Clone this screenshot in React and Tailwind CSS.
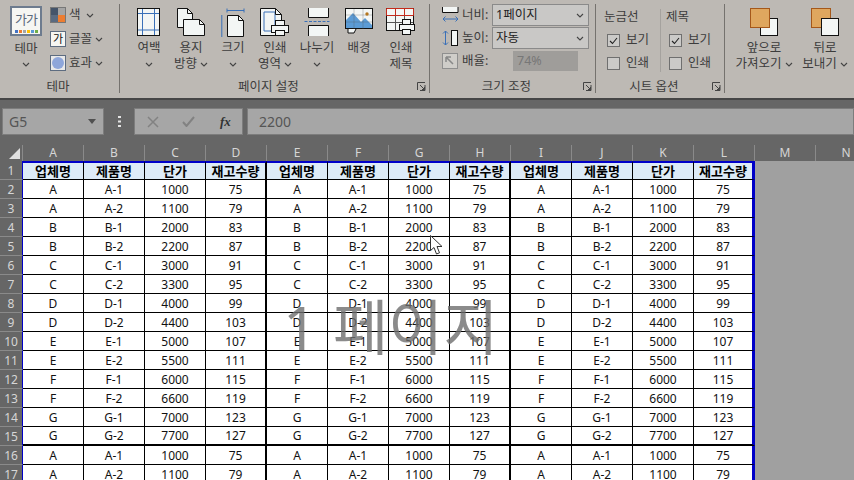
import React from "react";

const products = ["A", "A", "B", "B", "C", "C", "D", "D", "E", "E", "F", "F", "G", "G", "A", "A"];
const sub = [1, 2, 1, 2, 1, 2, 1, 2, 1, 2, 1, 2, 1, 2, 1, 2];
const prices = [1000, 1100, 2000, 2200, 3000, 3300, 4000, 4400, 5000, 5500, 6000, 6600, 7000, 7700, 1000, 1100];
const stock = [75, 79, 83, 87, 91, 95, 99, 103, 107, 111, 115, 119, 123, 127, 75, 79];
const columns = ["A", "B", "C", "D", "E", "F", "G", "H", "I", "J", "K", "L"];
const headers = ["업체명", "제품명", "단가", "재고수량"];

function Chevron({ className = "" }) {
  return (
    <svg width="8" height="5" viewBox="0 0 8 5" className={className}>
      <path d="M1 1l3 3 3-3" fill="none" stroke="#444" strokeWidth="1.1" />
    </svg>
  );
}

function Launcher() {
  return (
    <svg width="9" height="9" viewBox="0 0 9 9" className="shrink-0">
      <path d="M.5 8V.5H8M8 3v5.500H3M3 3l4.500 4.500M7.500 5v2.500H5" fill="none" stroke="#444" strokeWidth="1" />
    </svg>
  );
}

function BigButton({ icon, line1, line2, chevronOnly }) {
  return (
    <div className="w-[42px] flex flex-col items-center text-[12.5px] leading-[16px] text-[#3c3c3c]">
      <div className="h-[30px] mt-[8px] flex items-start justify-center">{icon}</div>
      <div className="mt-[2px] whitespace-nowrap">{line1}</div>
      {chevronOnly ? (
        <Chevron className="mt-[6px]" />
      ) : (
        line2 && (
          <div className="whitespace-nowrap flex items-center gap-[3px]">
            {line2}
            <Chevron />
          </div>
        )
      )}
    </div>
  );
}

const margins = (
  <svg width="24" height="28" viewBox="0 0 24 28">
    <rect x=".5" y=".5" width="22" height="27" fill="#f3f6f5" stroke="#111" />
    <path d="M5.500 1v26M17.500 1v26M1 5.500h21M1 22h21" stroke="#3a70b8" strokeWidth="1" />
  </svg>
);
const orientation = (
  <svg width="29" height="28" viewBox="0 0 29 28">
    <path d="M.5.5h10l5 5v14H.5z" fill="#f3f6f5" stroke="#111" />
    <path d="M10.500.5v5h5" fill="none" stroke="#111" />
    <path d="M6.500 11.500h16l5 5v11h-21z" fill="#f3f6f5" stroke="#111" />
    <path d="M22.500 11.500v5h5" fill="none" stroke="#111" />
  </svg>
);
const sizeIcon = (
  <svg width="24" height="30" viewBox="0 0 24 30">
    <path d="M6 2.500h17M6 .5v4M23 .5v4M.8 7v22" fill="none" stroke="#3a70b8" strokeWidth="1" />
    <path d="M6.500 7.500h11l5 5v16h-16z" fill="#f3f6f5" stroke="#111" />
    <path d="M17.500 7.500v5h5" fill="none" stroke="#111" />
  </svg>
);
const printArea = (
  <svg width="30" height="30" viewBox="0 0 30 30">
    <path d="M.5.5h15l6 6v21H.5z" fill="#f3f6f5" stroke="#111" />
    <path d="M4 4h11v19H4z" fill="none" stroke="#3a70b8" />
    <path d="M15.500.5v6h6" fill="none" stroke="#111" />
    <rect x="15.500" y="12.500" width="9" height="5" fill="#f3f6f5" stroke="#111" />
    <rect x="11.500" y="17.500" width="17" height="7" fill="#f3f6f5" stroke="#111" />
    <rect x="15.500" y="22.500" width="9" height="5" fill="#f3f6f5" stroke="#111" />
  </svg>
);
const breaks = (
  <svg width="26" height="28" viewBox="0 0 26 28">
    <path d="M4.500 0v9.500h20V0M4.500 28V17.500h20V28" fill="#f3f6f5" stroke="#111" />
    <path d="M.5 13.500h25" stroke="#3a70b8" strokeDasharray="3 1.500" />
  </svg>
);
const background = (
  <svg width="29" height="26" viewBox="0 0 29 26">
    <rect x=".5" y=".5" width="27" height="20" fill="#f3f6f5" stroke="#111" />
    <path d="M1 12l7-7 8 9 4-4 7 7v3H1z" fill="#5b9bd5" />
    <path d="M1 7h26M1 14h26M9 1v20M18 1v20" stroke="#555" strokeWidth=".3" />
    <circle cx="22" cy="6" r="1.700" fill="#b5761f" />
    <path d="M3 21v4h6l2-4" fill="#f3f6f5" stroke="#111" />
  </svg>
);
const printTitle = (
  <svg width="30" height="27" viewBox="0 0 30 27">
    <rect x=".5" y=".5" width="27" height="22" fill="#f3f6f5" stroke="#111" />
    <path d="M9.500 1v21M18.500 1v21M1 7.500h26M1 14.500h26" stroke="#555" strokeWidth="1" />
    <path d="M.5.5h27v7H.5zM9.500 1v6M18.500 1v6" fill="none" stroke="#c42b1c" strokeWidth="1" />
    <rect x="16.500" y="11.500" width="8" height="5" fill="#f3f6f5" stroke="#111" />
    <rect x="13.500" y="16.500" width="15" height="6" fill="#f3f6f5" stroke="#111" />
    <rect x="16.500" y="21.500" width="8" height="5" fill="#f3f6f5" stroke="#111" />
  </svg>
);

function GroupLabel({ children, launcher }) {
  return (
    <div className="h-[13px] flex items-center pr-[3px] text-[12.5px] leading-[13px] text-[#3c3c3c]">
      <span className="flex-1 text-center">{children}</span>
      {launcher && <Launcher />}
    </div>
  );
}

function ThemeGroup() {
  return (
    <section className="w-[120px] shrink-0 flex flex-col border-r border-[#75726e] mt-[4px] h-[89px]">
      <div className="flex h-[76px]">
        <div className="w-[52px] flex flex-col items-center text-[12.5px] leading-[16px] text-[#3c3c3c] pt-[2px]">
          <div className="w-[32px] h-[30px] border-2 border-[#6d7b8e] bg-[#f6f6f2] flex flex-col items-center justify-between pt-[3px] pb-[1px]">
            <span className="text-[13px] leading-[16px] tracking-[-1px] text-[#5a6a7c]">가가</span>
            <div className="flex gap-[1px]">
              <i className="w-[3px] h-[3px] bg-[#4472c4]" />
              <i className="w-[3px] h-[3px] bg-[#ed7d31]" />
              <i className="w-[3px] h-[3px] bg-[#a5a5a5]" />
              <i className="w-[3px] h-[3px] bg-[#ffc000]" />
              <i className="w-[3px] h-[3px] bg-[#5b9bd5]" />
              <i className="w-[3px] h-[3px] bg-[#70ad47]" />
            </div>
          </div>
          <div className="mt-[5px]">테마</div>
          <Chevron className="mt-[5px]" />
        </div>
        <div className="flex flex-col gap-[8px] pt-[3px] -ml-[2px] text-[12.5px] leading-[16px] text-[#3c3c3c]">
          <div className="flex items-center gap-[3px] h-[16px]">
            <div className="w-[16px] h-[16px] grid grid-cols-2 border border-[#777]">
              <i className="bg-[#44546a]" />
              <i className="bg-[#a5a5a5]" />
              <i className="bg-[#5a6a80]" />
              <i className="bg-[#ed7d31]" />
            </div>
            <span>색</span>
            <Chevron className="ml-[2px]" />
          </div>
          <div className="flex items-center gap-[3px] h-[16px]">
            <div className="w-[16px] h-[16px] border border-[#5d6c80] bg-[#f6f6f2] text-[11px] leading-[13px] text-center text-[#111]">가</div>
            <span>글꼴</span>
            <Chevron />
          </div>
          <div className="flex items-center gap-[3px] h-[16px]">
            <div className="w-[16px] h-[16px] border border-[#5d6c80] bg-[#e9e9e9] flex items-center justify-center">
              <i className="w-[12px] h-[12px] rounded-full bg-[#8ea6da]" />
            </div>
            <span>효과</span>
            <Chevron />
          </div>
        </div>
      </div>
      <GroupLabel>테마</GroupLabel>
    </section>
  );
}

function PageGroup() {
  return (
    <section className="w-[310px] shrink-0 flex flex-col border-r border-[#75726e] mt-[4px] h-[89px]">
      <div className="flex h-[80px] pl-[8px] -mt-[4px]">
        <BigButton icon={margins} line1="여백" chevronOnly />
        <BigButton icon={orientation} line1="용지" line2="방향" />
        <BigButton icon={sizeIcon} line1="크기" chevronOnly />
        <BigButton icon={printArea} line1="인쇄" line2="영역" />
        <BigButton icon={breaks} line1="나누기" chevronOnly />
        <BigButton icon={background} line1="배경" />
        <div className="w-[42px] flex flex-col items-center text-[12.5px] leading-[16px] text-[#3c3c3c]">
          <div className="h-[30px] mt-[8px]">{printTitle}</div>
          <div className="mt-[2px]">인쇄</div>
          <div>제목</div>
        </div>
      </div>
      <GroupLabel launcher>페이지 설정</GroupLabel>
    </section>
  );
}

function SizeRow({ icon, label, children }) {
  return (
    <div className="flex items-center h-[22px]">
      <div className="w-[18px] h-[18px] flex items-center justify-center shrink-0">{icon}</div>
      <span className="ml-[3px] w-[27px] text-[12.5px] whitespace-nowrap">{label}</span>
      {children}
    </div>
  );
}

function SizeSelect({ value }) {
  return (
    <div className="ml-[3px] w-[97px] h-[22px] border border-[#8a8a8a] bg-[#c9c8c6] flex items-center justify-between pl-[3px] pr-[4px] text-[12.5px] text-[#222]">
      <span>{value}</span>
      <Chevron />
    </div>
  );
}

function SizeGroup() {
  return (
    <section className="w-[166px] shrink-0 flex flex-col border-r border-[#75726e] mt-[4px] h-[89px]">
      <div className="h-[76px] pl-[11px] flex flex-col gap-[1px] text-[#3c3c3c]">
        <SizeRow
          label="너비:"
          icon={
            <svg width="17" height="16" viewBox="0 0 17 16">
              <path d="M.5 0v5.500h15.500V0" fill="#f3f6f5" stroke="#111" />
              <path d="M1 12h15M3.500 9.500L1 12l2.500 2.500M13.500 9.500L16 12l-2.500 2.500" fill="none" stroke="#3a70b8" />
            </svg>
          }
        >
          <SizeSelect value="1페이지" />
        </SizeRow>
        <SizeRow
          label="높이:"
          icon={
            <svg width="17" height="17" viewBox="0 0 17 17">
              <rect x="9.500" y=".5" width="6" height="15" fill="#f3f6f5" stroke="#111" />
              <path d="M3.500 1v14M1 3.500L3.500 1 6 3.500M1 12.500L3.500 15 6 12.500" fill="none" stroke="#3a70b8" />
            </svg>
          }
        >
          <SizeSelect value="자동" />
        </SizeRow>
        <SizeRow
          label="배율:"
          icon={
            <svg width="16" height="16" viewBox="0 0 16 16">
              <rect x=".5" y=".5" width="15" height="15" fill="#cfcdc9" stroke="#8f8f8f" />
              <path d="M4 4l7 7M4 4h5M4 4v5" fill="none" stroke="#888" strokeWidth="1.500" />
            </svg>
          }
        >
          <div className="ml-[24px] w-[65px] h-[20px] bg-[#9f9d9a] pl-[4px] text-[12.5px] leading-[20px] text-[#777]">74%</div>
        </SizeRow>
      </div>
      <GroupLabel launcher>크기 조정</GroupLabel>
    </section>
  );
}

function Check({ checked, label }) {
  return (
    <div className="flex items-center gap-[6px] h-[23px] text-[12.5px] pl-[1px]">
      <div className="w-[13px] h-[13px] border border-[#6f6f6f] bg-[#cbcac8] flex items-center justify-center">
        {checked && (
          <svg width="9" height="8" viewBox="0 0 9 8">
            <path d="M1 4l2.500 2.500L8 1" fill="none" stroke="#222" strokeWidth="1.100" />
          </svg>
        )}
      </div>
      <span>{label}</span>
    </div>
  );
}

function SheetGroup() {
  return (
    <section className="w-[129px] shrink-0 flex flex-col border-r border-[#75726e] mt-[4px] h-[89px]">
      <div className="h-[76px] flex text-[#3c3c3c] text-[12.5px]">
        <div className="w-[65px] border-r border-[#a5a29e] pl-[10px] mt-[5px] h-[63px]">
          <div className="h-[20px] leading-[15px] -ml-[2px]">눈금선</div>
          <Check checked label="보기" />
          <Check label="인쇄" />
        </div>
        <div className="pl-[5px] mt-[5px]">
          <div className="h-[20px] leading-[15px]">제목</div>
          <div className="pl-[2px]">
            <Check checked label="보기" />
            <Check label="인쇄" />
          </div>
        </div>
      </div>
      <GroupLabel launcher>시트 옵션</GroupLabel>
    </section>
  );
}

function ArrangeGroup() {
  return (
    <section className="flex-1 flex pl-[11px] text-[12.5px] leading-[16px] text-[#3c3c3c]">
      <div className="w-[56px] flex flex-col items-center pt-[8px]">
        <svg width="28" height="28" viewBox="0 0 28 28">
          <rect x="10.500" y="10.500" width="17" height="17" fill="#f3f6f5" stroke="#111" />
          <rect x=".5" y=".5" width="19" height="19" fill="#dfa75f" stroke="#a5581a" />
        </svg>
        <div className="mt-[4px] whitespace-nowrap">앞으로</div>
        <div className="whitespace-nowrap flex items-center gap-[3px]">
          가져오기
          <Chevron />
        </div>
      </div>
      <div className="w-[62px] ml-[2px] flex flex-col items-center pt-[8px]">
        <svg width="28" height="28" viewBox="0 0 28 28">
          <rect x=".5" y=".5" width="19" height="19" fill="#dfa75f" stroke="#a5581a" />
          <rect x="10.500" y="10.500" width="17" height="17" fill="#f3f6f5" stroke="#111" />
        </svg>
        <div className="mt-[4px] whitespace-nowrap">뒤로</div>
        <div className="whitespace-nowrap flex items-center gap-[3px]">
          보내기
          <Chevron />
        </div>
      </div>
    </section>
  );
}

function FormulaBar() {
  return (
    <div className="h-[47px] shrink-0 bg-[#666666] border-t-2 border-[#464646] flex items-start pt-[8px] pl-[2px] gap-[4px]">
      <div className="w-[102px] h-[27px] bg-[#a6a6a6] border border-[#7d7d7d] flex items-center justify-between pl-[6px] pr-[7px] text-[14px] text-[#555]">
        <span>G5</span>
        <svg width="8" height="5" viewBox="0 0 8 5">
          <path d="M0 0h8L4 5z" fill="#505050" />
        </svg>
      </div>
      <div className="w-[22px] h-[27px] flex items-center justify-center">
        <svg width="3" height="11" viewBox="0 0 3 11">
          <path d="M0 0h3v2H0zM0 4.500h3v2H0zM0 9h3v2H0z" fill="#e4e4e4" />
        </svg>
      </div>
      <div className="w-[109px] h-[27px] bg-[#a6a6a6] border border-[#7d7d7d] flex items-center pl-[12px] gap-[23px]">
        <svg width="12" height="12" viewBox="0 0 12 12">
          <path d="M1 1l10 10M11 1L1 11" stroke="#828282" strokeWidth="1.500" />
        </svg>
        <svg width="13" height="11" viewBox="0 0 13 11">
          <path d="M1 6l3.500 4L12 1" fill="none" stroke="#828282" strokeWidth="2" />
        </svg>
        <span className="font-['Liberation_Serif',serif] italic font-bold text-[13px] text-[#333] ml-[2px]">fx</span>
      </div>
      <div className="flex-1 h-[27px] bg-[#a6a6a6] border border-[#7d7d7d] pl-[11px] text-[14px] leading-[25px] text-[#555]">2200</div>
    </div>
  );
}

function ColumnHeaders() {
  return (
    <div className="flex h-[16px] shrink-0 bg-[#666666] text-[12px] leading-[16px] text-[#d6d6d6]">
      <div className="w-[23px] shrink-0 flex items-end justify-end border-r border-[#8a8a8a] pr-[2px] pb-[2px]">
        <svg width="11" height="11" viewBox="0 0 11 11">
          <path d="M11 0v11H0z" fill="#e0e0e0" />
        </svg>
      </div>
      {[...columns, "M", "N"].map((col) => (
        <div key={col} className="w-[61px] shrink-0 text-center border-r border-[#8a8a8a]">
          {col}
        </div>
      ))}
    </div>
  );
}

function Cell({ col, row, children, head }) {
  return (
    <div
      className={
        "w-[61px] shrink-0 flex items-center justify-center border-b pt-[1px] " +
        (col === 11 ? "border-r-[3px] border-r-[#0000c8] " : col === 3 || col === 7 ? "border-r-2 border-r-black " : "border-r border-r-black ") +
        (row === 13 ? "border-b-2 border-b-black " : "border-b-black ") +
        (head ? "bg-[#ddebf7] text-[13px] font-bold text-black border-t-2 border-t-[#0000c8] " : "bg-white text-[12px] text-[#111] ")
      }
    >
      {children}
    </div>
  );
}

function RowHead({ children }) {
  return (
    <div className="w-[23px] shrink-0 bg-[#666666] text-[#d6d6d6] text-[12px] pt-[1px] flex items-center justify-center border-r border-r-[#0000c8] border-b border-b-[#8a8a8a]">
      {children}
    </div>
  );
}

function Sheet() {
  const rows = products.map((p, i) => [p, `${p}-${sub[i]}`, prices[i], stock[i]]);
  return (
    <div className="flex bg-[#a0a0a0] flex-1 shrink-0">
      <div>
        <div className="flex h-[19px]">
          <RowHead>1</RowHead>
          {columns.map((c, col) => (
            <Cell key={c} col={col} row={-1} head>
              {headers[col % 4]}
            </Cell>
          ))}
        </div>
        {rows.map((row, i) => (
          <div key={i} className="flex h-[19px]">
            <RowHead>{i + 2}</RowHead>
            {columns.map((c, col) => (
              <Cell key={c} col={col} row={i}>
                {row[col % 4]}
              </Cell>
            ))}
          </div>
        ))}
      </div>
    </div>
  );
}

export default function App() {
  return (
    <div className="relative w-[854px] h-[480px] overflow-hidden flex flex-col bg-[#bdb9b4] font-['Noto_Sans','Noto_Sans_CJK_KR',sans-serif]">
      <header className="h-[98px] shrink-0 flex bg-[#bdb9b4]">
        <ThemeGroup />
        <PageGroup />
        <SizeGroup />
        <SheetGroup />
        <ArrangeGroup />
      </header>
      <FormulaBar />
      <ColumnHeaders />
      <Sheet />
      <div className="absolute left-[283px] top-[290px] text-[60px] leading-[74px] whitespace-nowrap text-[#6e6e6e]/80 pointer-events-none">1 페이지</div>
      <svg width="13" height="20" viewBox="0 0 13 20" className="absolute left-[430px] top-[235px]">
        <path d="M.5.5v15l3.500-3 2.500 6.500 3-1.200-2.500-6.300h5z" fill="#fff" stroke="#333" />
      </svg>
    </div>
  );
}
